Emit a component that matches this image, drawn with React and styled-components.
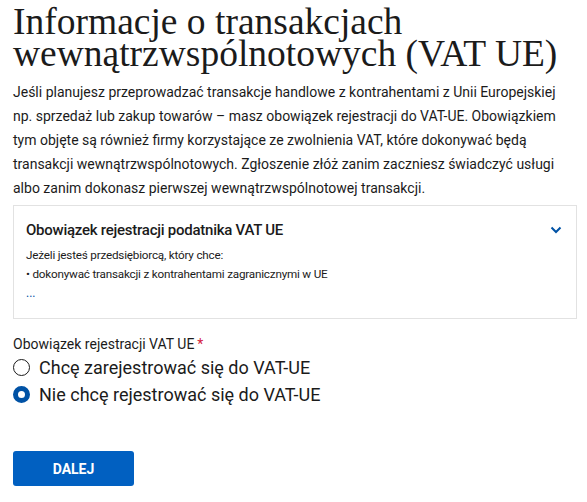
import styled, { createGlobalStyle } from "styled-components"
import { useState } from "react"

const Global = createGlobalStyle`
body {
  margin: 0;
  background: #fff;
  font-family: Roboto, "Noto Sans", sans-serif;
  color: #1b1b1b;
}
`

const Page = styled.div`
padding: 0 10px 0 13px;
`

const Heading = styled.h1`
margin: 0;
padding-top: 6px;
font-family: "Liberation Serif", serif;
font-weight: 400;
font-size: 37.5px;
line-height: 32px;
color: #1b1b1b;
`

const Lead = styled.p`
margin: 10px 0 0;
font-size: 14px;
line-height: 24px;
color: #1b1b1b;
`

const Box = styled.div`
margin-top: 5px;
border: 1px solid #e2e2e2;
padding: 13px 14px 15px 12px;
`

const BoxHead = styled.div`
display: flex;
justify-content: space-between;
align-items: center;
`

const BoxTitle = styled.h3`
margin: 0;
font-size: 15px;
letter-spacing: -0.25px;
font-weight: 500;
line-height: 22px;
`

const BoxText = styled.div`
margin-top: 5px;
font-size: 11.7px;
letter-spacing: -0.2px;
line-height: 19px;
color: #1b1b1b;
`

const More = styled.div`
color: #0052a5;
font-size: 12px;
line-height: 19px;
`

const Field = styled.fieldset`
border: 0;
margin: 15px 0 0;
padding: 0;
`

const Legend = styled.div`
font-size: 14px;
line-height: 20px;
`

const Star = styled.span`
color: #d4213d;
margin-left: 3px;
`

const Option = styled.label`
display: flex;
align-items: center;
gap: 9px;
font-size: 18px;
line-height: 27px;
cursor: pointer;
`

const Dot = styled.span`
width: 17px;
height: 17px;
box-sizing: border-box;
border-radius: 50%;
border: ${p => (p.$on ? "5px solid #0052a5" : "1.5px solid #1b1b1b")};
background: #fff;
flex-shrink: 0;
`

const Button = styled.button`
display: block;
margin-top: 43px;
width: 121px;
height: 35px;
border: 0;
border-radius: 3px;
background: #0160c1;
color: #fff;
font-family: Roboto, sans-serif;
font-weight: 700;
font-size: 14px;
cursor: pointer;
`

const options = ["Chcę zarejestrować się do VAT-UE", "Nie chcę rejestrować się do VAT-UE"]

export default function App() {
  const [picked, setPicked] = useState(1)
  return (
    <Page>
      <Global />
      <Heading>Informacje o transakcjach wewnątrzwspólnotowych (VAT UE)</Heading>
      <Lead>
        Jeśli planujesz przeprowadzać transakcje handlowe z kontrahentami z Unii Europejskiej np. sprzedaż lub zakup
        towarów – masz obowiązek rejestracji do VAT-UE. Obowiązkiem tym objęte są również firmy korzystające ze
        zwolnienia VAT, które dokonywać będą transakcji wewnątrzwspólnotowych. Zgłoszenie złóż zanim zaczniesz
        świadczyć usługi albo zanim dokonasz pierwszej wewnątrzwspólnotowej transakcji.
      </Lead>
      <Box>
        <BoxHead>
          <BoxTitle>Obowiązek rejestracji podatnika VAT UE</BoxTitle>
          <svg width="12" height="8" viewBox="0 0 12 8">
            <path d="M1.5 1.5 L6 6 L10.5 1.5" fill="none" stroke="#0052a5" strokeWidth="2" />
          </svg>
        </BoxHead>
        <BoxText>
          Jeżeli jesteś przedsiębiorcą, który chce:
          <br />• dokonywać transakcji z kontrahentami zagranicznymi w UE
        </BoxText>
        <More>...</More>
      </Box>
      <Field>
        <Legend>
          Obowiązek rejestracji VAT UE<Star>*</Star>
        </Legend>
        {options.map((o, i) => (
          <Option key={o} onClick={() => setPicked(i)}>
            <Dot $on={picked === i} />
            {o}
          </Option>
        ))}
      </Field>
      <Button>DALEJ</Button>
    </Page>
  )
}
